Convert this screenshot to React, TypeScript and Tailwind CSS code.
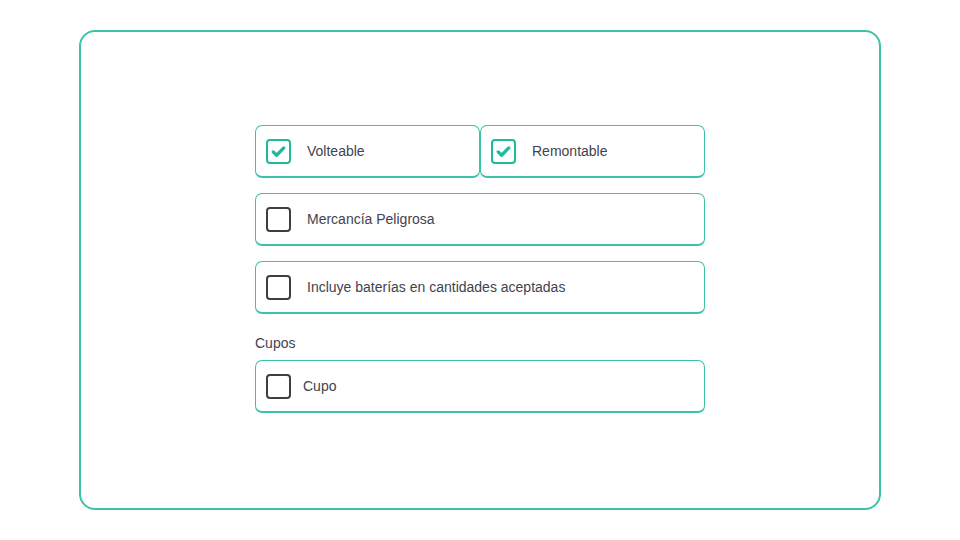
import React from 'react';

type BoxProps = { checked?: boolean };

const Box: React.FC<BoxProps> = ({ checked }) => (
  <span
    className={`flex h-[25px] w-[25px] shrink-0 items-center justify-center rounded-[4px] border-2 ${
      checked ? 'border-[#1dbb9c]' : 'border-[#3d3f47]'
    }`}
  >
    {checked && (
      <svg width="17" height="17" viewBox="0 0 24 24" fill="none">
        <path d="M4.5 12.5l4.8 4.8L19.5 7" stroke="#1dbb9c" strokeWidth="4.6" strokeLinecap="round" strokeLinejoin="round" />
      </svg>
    )}
  </span>
);

type OptionProps = { label: string; checked?: boolean; gap?: string; className?: string };

const Option: React.FC<OptionProps> = ({ label, checked, gap = 'gap-4', className = '' }) => (
  <label
    className={`flex h-[53px] items-center ${gap} rounded-[7px] border border-b-2 border-[#3cc3a5] bg-white pl-[10px] ${className}`}
  >
    <Box checked={checked} />
    <span className="text-[14px] text-[#3f4350]">{label}</span>
  </label>
);

const App: React.FC = () => {
  return (
    <div
      className="flex h-[540px] w-[960px] justify-center bg-white pt-[30px]"
      style={{ fontFamily: '"Liberation Sans", Arial, sans-serif' }}
    >
      <div className="flex h-[480px] w-[802px] justify-center rounded-[16px] border-2 border-[#3cc3a5] pt-[93px]">
        <div className="flex w-[450px] flex-col">
          <div className="flex">
            <Option label="Volteable" checked className="w-[225px]" />
            <Option label="Remontable" checked className="w-[225px]" />
          </div>
          <Option label="Mercancía Peligrosa" className="mt-[15px]" />
          <Option label="Incluye baterías en cantidades aceptadas" className="mt-[15px]" />
          <div className="mt-[19px] mb-[7px] text-[14px] leading-5 text-[#3f4350]">Cupos</div>
          <Option label="Cupo" gap="gap-3" />
        </div>
      </div>
    </div>
  );
};

export default App;
